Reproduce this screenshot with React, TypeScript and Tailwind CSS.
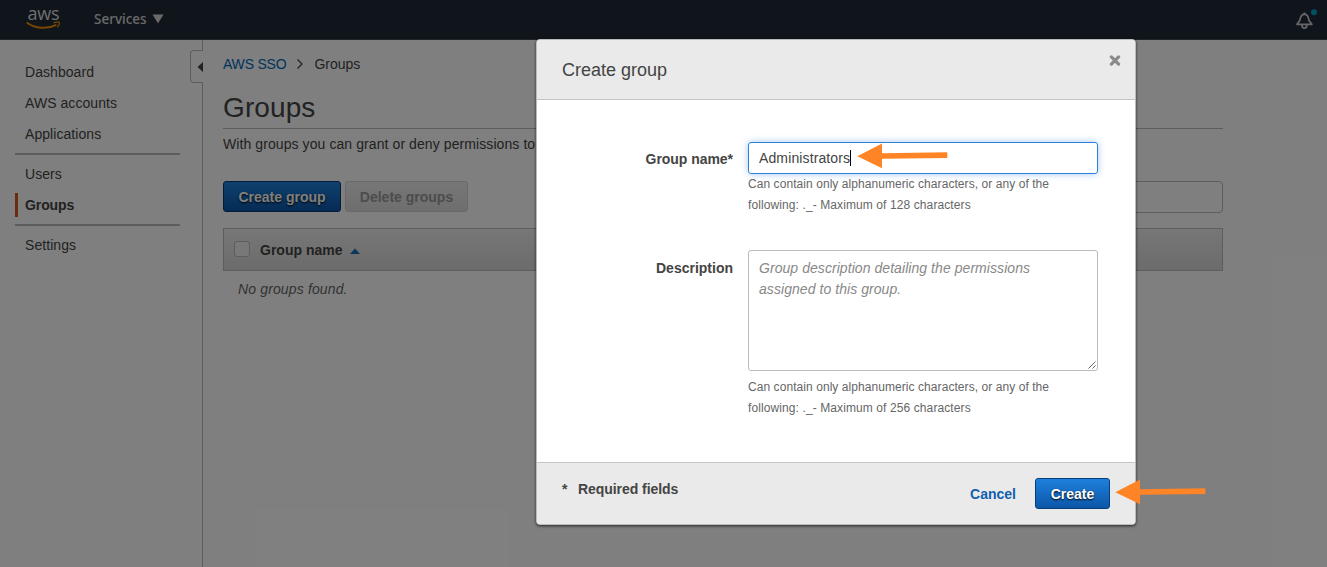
import React from "react";

const helpName = ["Can contain only alphanumeric characters, or any of the", "following: ._- Maximum of 128 characters"];
const helpDescription = ["Can contain only alphanumeric characters, or any of the", "following: ._- Maximum of 256 characters"];

function TopBar() {
  return (
    <header className="flex h-10 shrink-0 items-center border-b border-[#414750] bg-[#202a38] pl-[26px] pr-[10px]">
      <div className="flex h-10 w-[35px] flex-col items-center pt-[3px]">
        <span className="h-[18px] font-['Open_Sans',sans-serif] text-[18px] leading-[20px] tracking-[-0.2px] text-[#ddd]">aws</span>
        <svg width="35" height="9" viewBox="0 0 35 9" fill="none">
          <path d="M.8 1.4 C9 7.8 21 8.4 30.5 3.8" stroke="#f09000" strokeWidth="1.9" />
          <path d="M27.6 1.9 C30 1 32.8 .9 33.3 1.5 C33.7 2.6 32.8 4.6 31.4 6.2" stroke="#f09000" strokeWidth="1.3" />
        </svg>
      </div>
      <div className="ml-[33px] flex items-center pb-px">
        <span className="w-[52px] whitespace-nowrap font-['Noto_Sans',sans-serif] text-[13.5px] font-medium leading-5 text-[#d5d5d5]">Services</span>
        <svg className="ml-[6px]" width="12" height="10" viewBox="0 0 12 10">
          <path d="M.5 .5H11.5L6 9.3Z" fill="#d5d5d5" />
        </svg>
      </div>
      <svg className="ml-auto" width="24" height="24" viewBox="0 0 24 24" fill="none">
        <path d="M4 16.3H18.8L16 12.5C15.5 8.8 14.4 6.4 11.4 6.1C8.4 6.4 7.3 8.8 6.8 12.5Z" stroke="#ccc" strokeWidth="1.8" strokeLinejoin="round" />
        <path d="M11.4 6V4.6M9 16.5C9 21.4 13.8 21.4 13.8 16.5" stroke="#ccc" strokeWidth="1.8" />
        <circle cx="21" cy="4.2" r="3" fill="#00a1c9" />
      </svg>
    </header>
  );
}

function NavItem({ label, active }: { label: string; active?: boolean }) {
  return (
    <a className={active ? "flex h-6 items-center border-l-[3px] border-[#d85a1a] pl-[7px] font-bold tracking-[-0.1px]" : "flex h-6 items-center pl-[10px] tracking-[0.06px]"}>
      {label}
    </a>
  );
}

function Sidebar() {
  return (
    <aside className="relative w-[203px] shrink-0 border-r border-[#bbb]">
      <nav className="flex flex-col gap-[7px] pl-[15px] pr-[22px] pt-5 text-[14px] leading-5 text-[#444]">
        <NavItem label="Dashboard" />
        <NavItem label="AWS accounts" />
        <NavItem label="Applications" />
        <div className="h-0.5 bg-[#bbb]" />
        <NavItem label="Users" />
        <NavItem label="Groups" active />
        <div className="h-0.5 bg-[#bbb]" />
        <NavItem label="Settings" />
      </nav>
      <div className="absolute -right-px top-[10px] flex h-[33px] w-[13px] items-center justify-end rounded-l-[4px] border border-r-0 border-[#bbb] bg-white">
        <svg width="6" height="10" viewBox="0 0 6 10">
          <path d="M6 0V10L.5 5Z" fill="#444" />
        </svg>
      </div>
    </aside>
  );
}

function Page() {
  return (
    <main className="w-[1040px] px-5 pt-[14px] text-[14px] leading-5 text-[#444]">
      <div className="flex h-5 items-center">
        <span className="tracking-[-0.2px] text-[#0067bb]">AWS SSO</span>
        <svg className="ml-[10px] mr-[10px]" width="8" height="12" viewBox="0 0 8 12" fill="none">
          <path d="M1.5 1.5L6 6L1.5 10.5" stroke="#444" strokeWidth="1.3" />
        </svg>
        <span>Groups</span>
      </div>
      <h1 className="mt-[14px] h-[41px] border-b border-[#bbb] text-[28px] leading-[39px] tracking-[0.1px]">Groups</h1>
      <p className="mt-[5px] whitespace-nowrap tracking-[0.085px]">With groups you can grant or deny permissions to</p>
      <div className="mt-[27px] flex h-8 items-start">
        <button className="h-[31px] w-[118px] rounded-[3px] border border-[#073b75] bg-linear-to-b from-[#2080dd] to-[#0b57a8] font-bold text-white [text-shadow:0_1px_2px_#000]">Create group</button>
        <button className="ml-1 h-[31px] w-[123px] rounded-[3px] border border-[#d5d5d5] bg-linear-to-b from-[#eee] to-[#ddd] font-bold text-[#999]">Delete groups</button>
        <div className="ml-auto h-8 w-[300px] rounded-[4px] border border-[#bbb]" />
      </div>
      <div className="mt-[15px] flex h-[43px] items-center border border-[#bbb] bg-linear-to-b from-[#eee] to-[#d8d8d8] pl-[10px] font-bold">
        <span className="mb-0.5 size-4 rounded-[3px] border border-[#bbb] bg-[#f0f0f0]" />
        <span className="ml-[10px]">Group name</span>
        <svg className="ml-[8px] mt-[3px]" width="10" height="6" viewBox="0 0 10 6">
          <path d="M0 6L5 .5L10 6Z" fill="#146eb4" />
        </svg>
      </div>
      <p className="ml-[15px] mt-[8px] italic tracking-[0.14px] text-[#666]">No groups found.</p>
    </main>
  );
}

function Help({ lines }: { lines: string[] }) {
  return (
    <p className="whitespace-nowrap text-[12px] leading-[21px] tracking-[0.065px] text-[#666]">
      {lines[0]}
      <br />
      <span className="tracking-[0.1px]">{lines[1]}</span>
    </p>
  );
}

function Arrow({ className }: { className: string }) {
  return (
    <svg className={className} width="92" height="26" viewBox="0 0 92 26">
      <path d="M.3 13.3L25 .5V10.2L90.3 9.2V15L25 15.8V25.2Z" fill="#ff8426" />
    </svg>
  );
}

function Dialog() {
  return (
    <section className="relative mt-[39px] flex h-[486px] w-[600px] flex-col rounded-[4px] border border-[#bbb] bg-white text-[14px] leading-5 text-[#444] shadow-[0_1px_3px_rgba(0,0,0,0.7)]">
      <header className="flex h-[60px] shrink-0 justify-between rounded-t-[3px] border-b border-[#c4c4c4] bg-[#eaeaea] pl-[25px] pr-[14px]">
        <h2 className="pt-[18px] text-[18px] leading-6">Create group</h2>
        <svg className="mt-[14px]" width="12" height="12" viewBox="0 0 12 12">
          <path d="M2.4 2.9L9.6 10.1M9.6 2.9L2.4 10.1" stroke="#8a8a8a" strokeWidth="3.2" strokeLinecap="round" />
        </svg>
      </header>
      <div className="grow pt-[42px]">
        <div className="flex">
          <label className="w-[196px] pt-[7px] text-right font-bold tracking-[-0.04px]">Group name*</label>
          <div className="ml-[15px]">
            <div className="flex h-8 w-[350px] items-center rounded-[3px] border border-[#2d80d8] pl-[10px] shadow-[0_0_7px_rgba(30,120,220,0.4)]">
              <span className="tracking-[0.12px]">Administrators</span>
              <span className="h-4 w-px bg-black" />
            </div>
            <Help lines={helpName} />
          </div>
        </div>
        <div className="mt-[34px] flex">
          <label className="w-[196px] pt-[8px] text-right font-bold">Description</label>
          <div className="ml-[15px]">
            <div className="relative h-[121px] w-[350px] whitespace-nowrap rounded-[3px] border border-[#bbb] pl-[10px] pt-[7px] italic leading-[21px] tracking-[0.06px] text-[#888]">
              Group description detailing the permissions
              <br />
              assigned to this group.
              <svg className="absolute bottom-px right-px" width="8" height="8" viewBox="0 0 8 8">
                <path d="M.5 7.5L7.5 .5M4.5 7.5L7.5 4.5" stroke="#555" strokeWidth=".9" />
              </svg>
            </div>
            <div className="mt-[6px]">
              <Help lines={helpDescription} />
            </div>
          </div>
        </div>
      </div>
      <footer className="flex h-[62px] shrink-0 items-start rounded-b-[3px] border-t border-[#c4c4c4] bg-[#eaeaea] pl-[25px] pr-[25px] font-bold">
        <span className="mt-4 w-4">*</span>
        <span className="mt-4 tracking-[-0.06px]">Required fields</span>
        <span className="ml-auto mr-[19px] mt-[21px] text-[#125faf]">Cancel</span>
        <button className="mt-[15px] h-[31px] w-[75px] rounded-[3px] border border-[#063e7a] bg-linear-to-b from-[#2080dd] to-[#0b57a8] text-white [text-shadow:0_1px_2px_#000]">Create</button>
      </footer>
      <Arrow className="absolute left-[320px] top-[103px]" />
      <Arrow className="absolute left-[578px] top-[439px]" />
    </section>
  );
}

export default function App() {
  return (
    <div className="relative flex h-[567px] w-[1327px] flex-col overflow-hidden bg-white font-['Liberation_Sans',Arial,sans-serif]">
      <TopBar />
      <div className="flex grow">
        <Sidebar />
        <Page />
      </div>
      <div className="absolute inset-0 flex items-start bg-black/50 pl-[536px]">
        <Dialog />
      </div>
    </div>
  );
}
